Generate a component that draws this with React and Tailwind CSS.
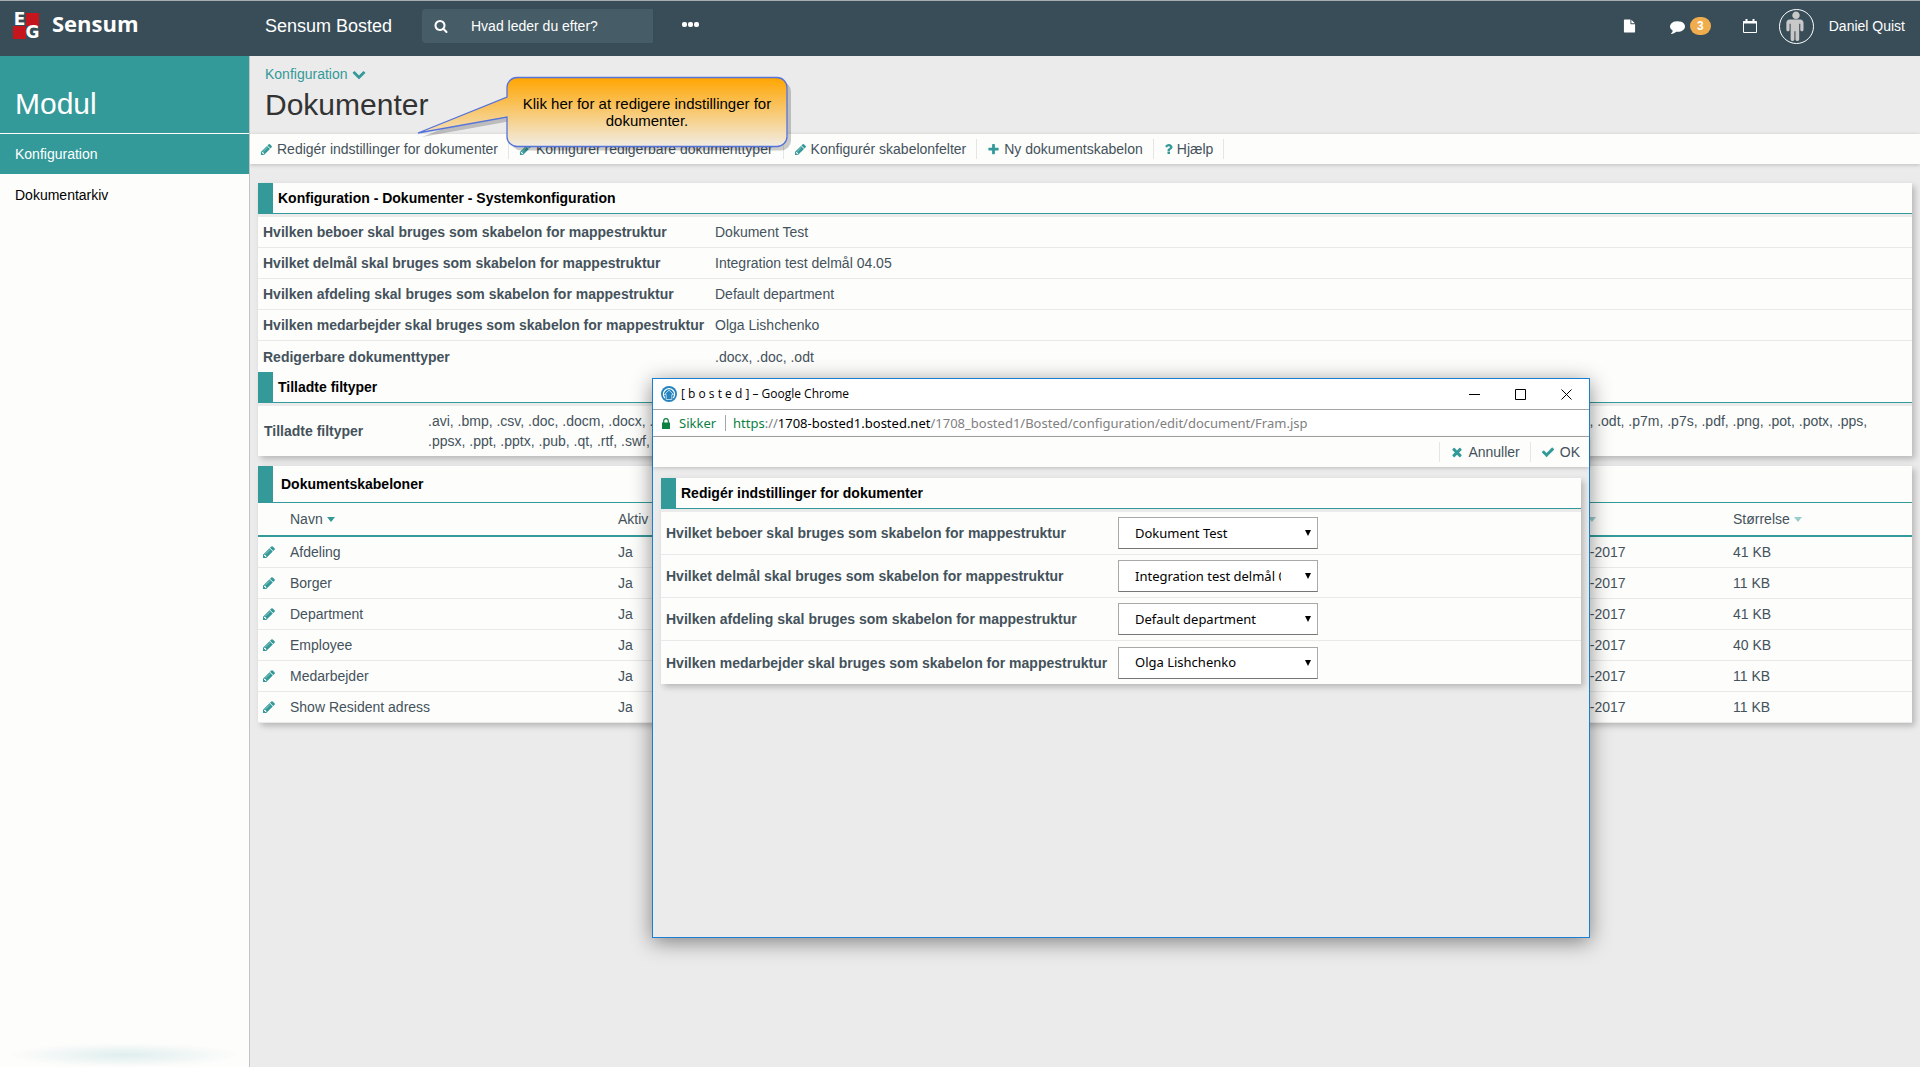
import React from 'react';

const icons = {
  pencil: 'M491 1536l91-91-235-235-91 91v107h128v128h107zm523-928q0-22-22-22-10 0-17 7l-542 542q-7 7-7 17 0 22 22 22 10 0 17-7l542-542q7-7 7-17zm-54-192l416 416-832 832h-416v-416zm683 96q0 53-37 90l-166 166-416-416 166-165q36-38 90-38 53 0 91 38l235 234q37 39 37 91z',
  search: 'M1216 832q0-185-131.5-316.5t-316.5-131.5-316.5 131.5-131.5 316.5 131.5 316.5 316.5 131.5 316.5-131.5 131.5-316.5zm512 832q0 52-38 90t-90 38q-54 0-90-38l-343-342q-179 124-399 124-143 0-273.5-55.5t-225-150-150-225-55.5-273.5 55.5-273.5 150-225 225-150 273.5-55.5 273.5 55.5 225 150 150 225 55.5 273.5q0 220-124 399l343 343q37 37 37 90z',
  comment: 'M1792 896q0 174-120 321.5t-326 233-450 85.5q-70 0-145-8-198 175-460 242-49 14-114 22-17 2-30.5-9t-17.5-29v-1q-3-4-.5-12t2-10 4.5-9.500l6-9 7-8.500 8-9q7-8 31-34.500t34.500-38 31-39.500 32.500-51 27-59 26-76q-157-89-247.500-220t-90.500-281q0-130 71-248.500t191-204.500 286-136.500 348-50.500q244 0 450 85.500t326 233 120 321.500z',
  file: 'M1152 512v-472q22 14 36 28l408 408q14 14 28 36h-472zm-128 32q0 40 28 68t68 28h544v1056q0 40-28 68t-68 28h-1344q-40 0-68-28t-28-68v-1600q0-40 28-68t68-28h800v544z',
  chevron: 'M1683 808l-742 741q-19 19-45 19t-45-19l-742-741q-19-19-19-45.5t19-45.5l166-165q19-19 45-19t45 19l531 531 531-531q19-19 45-19t45 19l166 165q19 19 19 45.5t-19 45.5z',
  plus: 'M1600 736v192q0 40-28 68t-68 28h-416v416q0 40-28 68t-68 28h-192q-40 0-68-28t-28-68v-416h-416q-40 0-68-28t-28-68v-192q0-40 28-68t68-28h416v-416q0-40 28-68t68-28h192q40 0 68 28t28 68v416h416q40 0 68 28t28 68z',
  check: 'M1671 566q0 40-28 68l-724 724-136 136q-28 28-68 28t-68-28l-136-136-362-362q-28-28-28-68t28-68l136-136q28-28 68-28t68 28l294 295 656-657q28-28 68-28t68 28l136 136q28 28 28 68z',
  times: 'M1490 1322q0 40-28 68l-136 136q-28 28-68 28t-68-28l-294-294-294 294q-28 28-68 28t-68-28l-136-136q-28-28-28-68t28-68l294-294-294-294q-28-28-28-68t28-68l136-136q28-28 68-28t68 28l294 294 294-294q28-28 68-28t68 28l136 136q28 28 28 68t-28 68l-294 294 294 294q28 28 28 68z',
  question: 'M1088 1256v240q0 16-12 28t-28 12h-240q-16 0-28-12t-12-28v-240q0-16 12-28t28-12h240q16 0 28 12t12 28zm316-600q0 54-15.5 101t-35 76.5-55 59.5-57.5 43.5-61 35.5q-41 23-68.5 65t-27.5 67q0 17-12 32.5t-28 15.5h-240q-15 0-25.5-18.5t-10.5-37.5v-45q0-83 65-156.5t143-108.5q59-27 84-56t25-76q0-42-46.5-74t-107.5-32q-65 0-108 29-35 25-107 115-13 16-31 16-12 0-25-8l-164-125q-13-10-15.5-25t5.5-28q160-266 464-266 80 0 161 31t146 83 106 127.5 41 158.5z',
  male: 'M1344 704v416q0 40-28 68t-68 28-68-28-28-68v-352h-64v912q0 46-33 79t-79 33-79-33-33-79v-464h-64v464q0 46-33 79t-79 33-79-33-33-79v-912h-64v352q0 40-28 68t-68 28-68-28-28-68v-416q0-80 56-136t136-56h640q80 0 136 56t56 136zm-224-448q0 93-65.5 158.5t-158.5 65.5-158.5-65.5-65.5-158.5 65.5-158.5 158.5-65.5 158.5 65.5 65.5 158.5z',
};

const Icon = ({ name, className, box = '0 0 1792 1792' }) => (
  <svg viewBox={box} className={className} fill="currentColor" aria-hidden="true">
    <path d={icons[name]} />
  </svg>
);

const Caret = ({ className }) => (
  <svg viewBox="0 0 8 5" className={className} fill="currentColor" aria-hidden="true">
    <path d="M0 0h8L4 5z" />
  </svg>
);

const actions = [
  { icon: 'pencil', label: 'Redigér indstillinger for dokumenter' },
  { icon: 'pencil', label: 'Konfigurér redigerbare dokumenttyper' },
  { icon: 'pencil', label: 'Konfigurér skabelonfelter' },
  { icon: 'plus', label: 'Ny dokumentskabelon' },
  { icon: 'question', label: 'Hjælp', narrow: true },
];

const settings = [
  ['Hvilken beboer skal bruges som skabelon for mappestruktur', 'Dokument Test'],
  ['Hvilket delmål skal bruges som skabelon for mappestruktur', 'Integration test delmål 04.05'],
  ['Hvilken afdeling skal bruges som skabelon for mappestruktur', 'Default department'],
  ['Hvilken medarbejder skal bruges som skabelon for mappestruktur', 'Olga Lishchenko'],
  ['Redigerbare dokumenttyper', '.docx, .doc, .odt'],
];

const fileTypes =
  '.avi, .bmp, .csv, .doc, .docm, .docx, .dot, .dotm, .dotx, .emf, .eml, .htm, .html, .jpeg, .jpg, .key, .log, .m4a, .m4v, .mdb, .mid, .mov, .mp3, .mp4, .mpeg, .mpg, .mpp, .msg, .odf, .odg, .odp, .ods, .odt, .p7m, .p7s, .pdf, .png, .pot, .potx, .pps, .ppsx, .ppt, .pptx, .pub, .qt, .rtf, .swf, .tif, .tiff, .txt, .wav, .wma, .wmv, .xls, .xlsx, .xml, .zip';

const templates = [
  ['Afdeling', '41 KB'],
  ['Borger', '11 KB'],
  ['Department', '41 KB'],
  ['Employee', '40 KB'],
  ['Medarbejder', '11 KB'],
  ['Show Resident adress', '11 KB'],
];

const fields = [
  { id: 'resident', label: 'Hvilket beboer skal bruges som skabelon for mappestruktur', value: 'Dokument Test' },
  { id: 'goal', label: 'Hvilket delmål skal bruges som skabelon for mappestruktur', value: 'Integration test delmål 04.05' },
  { id: 'department', label: 'Hvilken afdeling skal bruges som skabelon for mappestruktur', value: 'Default department' },
  { id: 'employee', label: 'Hvilken medarbejder skal bruges som skabelon for mappestruktur', value: 'Olga Lishchenko' },
];

const PanelTitle = ({ children, tall }) => (
  <div className={tall ? 'flex h-[37px] bg-[#fdfdfb]' : 'flex h-[31px] bg-[#fdfdfb]'}>
    <div className="w-[15px] bg-[#339999]" />
    <h2 className={tall ? 'flex flex-1 items-center border-b border-[#339999] pl-2 font-bold text-black' : 'flex flex-1 items-center border-b border-[#339999] pl-[5px] font-bold text-black'}>
      {children}
    </h2>
  </div>
);

const Header = () => (
  <header className="flex h-14 shrink-0 items-center border-t border-[#a5adb1] bg-[#384d58] pb-[5px] text-white">
    <a href="#" className="flex w-[252px] items-center pl-[13px]">
      <span className="grid grid-cols-2 font-['DejaVu_Sans',sans-serif] text-[17px] leading-[13px] font-bold">
        <span className="flex size-[13px] items-center justify-center">E</span>
        <span className="size-[13px] bg-[#c4161c]" />
        <span className="size-[13px] bg-[#c4161c]" />
        <span className="flex size-[13px] items-center justify-center">G</span>
      </span>
      <span className="pb-[6px] pl-[13px] font-['Open_Sans',sans-serif] text-[22px] leading-7 font-bold">Sensum</span>
    </a>
    <a href="#" className="w-[157px] pl-[13px] text-lg leading-6 whitespace-nowrap">Sensum Bosted</a>
    <label className="ml-[13px] flex h-[34px] w-[231px] items-center rounded-l-sm bg-[#465c66] pl-3">
      <Icon name="search" className="size-[14px]" />
      <input aria-label="Søg" placeholder="Hvad leder du efter?" className="ml-[23px] w-40 bg-transparent text-sm text-white outline-none placeholder:text-white" />
    </label>
    <button aria-label="Mere" className="ml-[29px] flex gap-px pb-[3px]">
      <span className="size-[5px] rounded-[2px] bg-white" />
      <span className="size-[5px] rounded-[2px] bg-white" />
      <span className="size-[5px] rounded-[2px] bg-white" />
    </button>
    <div className="ml-auto flex items-center pr-[15px]">
      <button aria-label="Dokumenter">
        <Icon name="file" className="h-[14px] w-[13px]" />
      </button>
      <button aria-label="Beskeder" className="ml-[34px] flex items-center gap-[5px]">
        <Icon name="comment" className="size-[15px]" />
        <span className="flex h-[18px] w-[21px] items-center justify-center rounded-full bg-[#f0ad4e] text-xs font-bold">3</span>
      </button>
      <button aria-label="Kalender" className="ml-8">
        <svg viewBox="0 0 14 14" className="size-[14px]" fill="none" stroke="currentColor" aria-hidden="true">
          <path d="M.5 2.5h13v11H.5z" />
          <path d="M0 3.5h14" strokeWidth="2" />
          <path d="M3.5 0v3M10.5 0v3" strokeWidth="2" />
        </svg>
      </button>
      <button className="ml-[22px] flex items-center gap-[15px] text-sm">
        <span className="flex size-[35px] items-center justify-center rounded-full border border-white text-[#c8c8c8]">
          <Icon name="male" className="size-[30px]" />
        </span>
        Daniel Quist
      </button>
    </div>
  </header>
);

const Sidebar = () => (
  <nav className="relative w-[250px] shrink-0 border-r border-[#c3c3c3] bg-[#fdfdfb] text-sm">
    <h2 className="h-[77px] bg-[#339999] pt-7 pl-[15px] text-[30px] leading-10 text-white">Modul</h2>
    <a href="#" className="mt-px flex h-10 items-center bg-[#339999] pl-[15px] text-white">Konfiguration</a>
    <a href="#" className="flex h-[42px] items-center pl-[15px] text-black">Dokumentarkiv</a>
    <div className="absolute inset-x-0 bottom-0 h-6 bg-[radial-gradient(ellipse_115px_12px_at_center,#dfeeee,#fdfdfb)]" />
  </nav>
);

const Callout = () => (
  <div className="absolute top-[76px] left-[417px] h-[76px] w-[376px]">
    <svg viewBox="0 0 376 76" className="absolute inset-0 size-full" aria-hidden="true">
      <defs>
        <linearGradient id="callout" x1="0" y1="0" x2="0" y2="1">
          <stop offset="0" stopColor="#ffa500" />
          <stop offset="1" stopColor="#f1ede4" />
        </linearGradient>
      </defs>
      <path transform="translate(4 4)" fill="#000" fillOpacity=".2" d="M100 1.500h260a10 10 0 0 1 10 10v49a10 10 0 0 1-10 10H100a10 10 0 0 1-10-10V41L1 57l89-36v-9.500a10 10 0 0 1 10-10z" />
      <path fill="url(#callout)" stroke="#5673dc" strokeWidth="1.300" d="M100 1.500h260a10 10 0 0 1 10 10v49a10 10 0 0 1-10 10H100a10 10 0 0 1-10-10V41L1 57l89-36v-9.500a10 10 0 0 1 10-10z" />
    </svg>
    <p className="relative ml-[90px] w-[280px] px-3 pt-[19px] text-center text-[15px] leading-[17px] text-black">
      Klik her for at redigere indstillinger for dokumenter.
    </p>
  </div>
);

const Popup = () => (
  <section
    role="dialog"
    aria-label="Redigér indstillinger for dokumenter"
    className="absolute top-[378px] left-[652px] flex h-[560px] w-[938px] flex-col border border-[#1a7fd0] bg-[#ebebeb] shadow-[0_4px_20px_rgba(0,0,0,0.45)]"
  >
    <div className="flex h-[30px] items-center bg-white pl-2 font-['Open_Sans',sans-serif] text-xs text-black">
      <svg viewBox="0 0 16 16" className="size-4" aria-hidden="true">
        <circle cx="8" cy="8" r="8" fill="#2583bd" />
        <path d="M3.800 12A5.600 5.600 0 1 1 12.200 12" fill="none" stroke="#fff" strokeWidth="1.200" />
        <path d="M8 4.200l4.500 4.300H10.800V13.500H5.200V8.500H3.500z" fill="#2583bd" stroke="#d8ecf8" strokeWidth=".8" />
      </svg>
      <span className="pl-1">[ b o s t e d ] – Google Chrome</span>
      <div className="ml-auto flex">
        <button aria-label="Minimer" className="flex h-[30px] w-[45px] items-center justify-center">
          <svg viewBox="0 0 11 11" className="size-[11px]" stroke="#000"><path d="M0 5.500h11" /></svg>
        </button>
        <button aria-label="Maksimer" className="flex h-[30px] w-[46px] items-center justify-center">
          <svg viewBox="0 0 11 11" className="size-[11px]" fill="none" stroke="#000"><path d="M.5.5h10v10H.5z" /></svg>
        </button>
        <button aria-label="Luk" className="flex h-[30px] w-[46px] items-center justify-center">
          <svg viewBox="0 0 11 11" className="size-[11px]" stroke="#000"><path d="M.5.5l10 10M10.500.5l-10 10" /></svg>
        </button>
      </div>
    </div>
    <div className="flex h-7 items-center border-y border-[#a6a6a6] bg-white pl-[9px] font-['Noto_Sans',sans-serif] text-[13px] text-[#808080]">
      <svg viewBox="0 0 8 11" className="h-[11px] w-2" aria-hidden="true">
        <path d="M0 4.500h8V11H0z" fill="#0b8043" />
        <path d="M1.700 5V3a2.300 2.300 0 0 1 4.600 0v2" fill="none" stroke="#0b8043" strokeWidth="1.200" />
      </svg>
      <span className="w-[55px] pl-[9px] text-[#0b8043]">Sikker</span>
      <span className="h-4 border-l border-[#a6a6a6] pr-[7px]" />
      <span>
        <span className="text-[#0b8043]">https</span>://<span className="text-black">1708-bosted1.bosted.net</span>/1708_bosted1/Bosted/configuration/edit/document/Fram.jsp
      </span>
    </div>
    <div className="flex h-[30px] items-center justify-end bg-[#fdfdfb] pr-[9px] shadow-[0_1px_4px_rgba(0,0,0,0.2)]">
      <button className="flex h-5 items-center gap-1 border-l border-[#e5e5e5] px-[10px]">
        <Icon name="times" className="size-[14px] text-[#339999]" />
        Annuller
      </button>
      <button className="flex h-5 items-center gap-[5px] border-l border-[#e5e5e5] pl-[10px]">
        <Icon name="check" className="size-[14px] text-[#339999]" />
        OK
      </button>
    </div>
    <form className="mx-2 mt-[11px] shadow-[3px_3px_6px_rgba(0,0,0,0.22)]">
      <PanelTitle>Redigér indstillinger for dokumenter</PanelTitle>
      <div className="divide-y divide-[#e9e9e9] border-t-[3px] border-[#ebebeb] bg-[#fdfdfb]">
        {fields.map((field) => (
          <div key={field.id} className="flex h-[43px] items-center pl-[5px]">
            <label htmlFor={field.id} className="w-[452px] font-bold">{field.label}</label>
            <div className="relative">
              <select
                id={field.id}
                className="h-8 w-[200px] appearance-none border border-[#a9a9a9] border-b-[#767676] bg-white pr-9 pl-4 font-['Noto_Sans',sans-serif] text-[13px] text-black"
              >
                <option>{field.value}</option>
              </select>
              <svg viewBox="0 0 6 6" className="pointer-events-none absolute top-[13px] right-[7px] size-[6px]" aria-hidden="true"><path d="M0 0h6L3 6z" /></svg>
            </div>
          </div>
        ))}
      </div>
    </form>
  </section>
);

const App = () => {
  return (
    <div className="relative flex h-screen flex-col overflow-hidden bg-white pb-1 font-['Liberation_Sans',Arial,sans-serif] text-sm text-[#44525b]">
      <Header />
      <div className="flex flex-1">
        <Sidebar />
        <main className="min-w-0 flex-1 bg-[#ebebeb]">
          <div className="h-[78px] pt-2 pl-[15px]">
            <a href="#" className="flex items-center gap-1 leading-5 text-[#339999]">
              Konfiguration
              <Icon name="chevron" className="size-[14px]" />
            </a>
            <h1 className="text-[30px] leading-[42px] text-[#333333]">Dokumenter</h1>
          </div>

          <div className="flex h-[30px] items-center bg-[#fdfdfb] shadow-[0_1px_4px_rgba(0,0,0,0.2)]">
            {actions.map((action) => (
              <button key={action.label} className="flex h-5 items-center gap-1 border-r border-[#e5e5e5] px-[10px] whitespace-nowrap">
                <Icon
                  name={action.icon}
                  box={action.narrow ? '350 0 1092 1792' : undefined}
                  className={action.narrow ? 'h-[14px] w-[9px] text-[#339999]' : 'size-[13px] text-[#339999]'}
                />
                {action.label}
              </button>
            ))}
          </div>

          <div className="mt-[19px] mr-2 ml-2 shadow-[3px_3px_6px_rgba(0,0,0,0.22)]">
            <PanelTitle>Konfiguration - Dokumenter - Systemkonfiguration</PanelTitle>
            <dl className="divide-y divide-[#e9e9e9] border-t-[3px] border-[#ebebeb] bg-[#fdfdfb]">
              {settings.map(([label, value]) => (
                <div key={label} className="flex h-[31px] items-center pl-[5px]">
                  <dt className="w-[452px] font-bold">{label}</dt>
                  <dd>{value}</dd>
                </div>
              ))}
            </dl>
            <PanelTitle>Tilladte filtyper</PanelTitle>
            <dl className="flex h-[53px] items-center border-t-[3px] border-[#ebebeb] bg-[#fdfdfb] pr-3 pl-[6px]">
              <dt className="w-[164px] shrink-0 font-bold">Tilladte filtyper</dt>
              <dd className="leading-5">{fileTypes}</dd>
            </dl>
          </div>

          <div className="mt-[10px] mr-2 ml-2 shadow-[3px_3px_6px_rgba(0,0,0,0.22)]">
            <PanelTitle tall>Dokumentskabeloner</PanelTitle>
            <table className="w-full table-fixed border-collapse bg-[#fdfdfb] text-left">
              <thead>
                <tr className="h-[33px] border-b-2 border-[#339999]">
                  <th className="w-8" aria-label="Rediger" />
                  <th className="w-[328px] font-normal">
                    <button className="flex items-center gap-1">Navn <Caret className="h-[5px] w-2 text-[#339999]" /></button>
                  </th>
                  <th className="font-normal">
                    <button className="flex items-center gap-1">Aktiv</button>
                  </th>
                  <th className="w-[179px] font-normal">
                    <button className="flex items-center gap-1">Dato <Caret className="h-[5px] w-2 text-[#99cccc]" /></button>
                  </th>
                  <th className="w-[179px] font-normal">
                    <button className="flex items-center gap-1">Størrelse <Caret className="h-[5px] w-2 text-[#99cccc]" /></button>
                  </th>
                </tr>
              </thead>
              <tbody>
                {templates.map(([name, size]) => (
                  <tr key={name} className="h-[31px] border-b border-[#e9e9e9]">
                    <td className="pl-1">
                      <button aria-label={`Rediger ${name}`} className="block">
                        <Icon name="pencil" className="size-[14px] text-[#339999]" />
                      </button>
                    </td>
                    <td>{name}</td>
                    <td>Ja</td>
                    <td>04-05-2017</td>
                    <td>{size}</td>
                  </tr>
                ))}
              </tbody>
            </table>
          </div>
        </main>
      </div>

      <Callout />
      <Popup />
    </div>
  );
};

export default App;
